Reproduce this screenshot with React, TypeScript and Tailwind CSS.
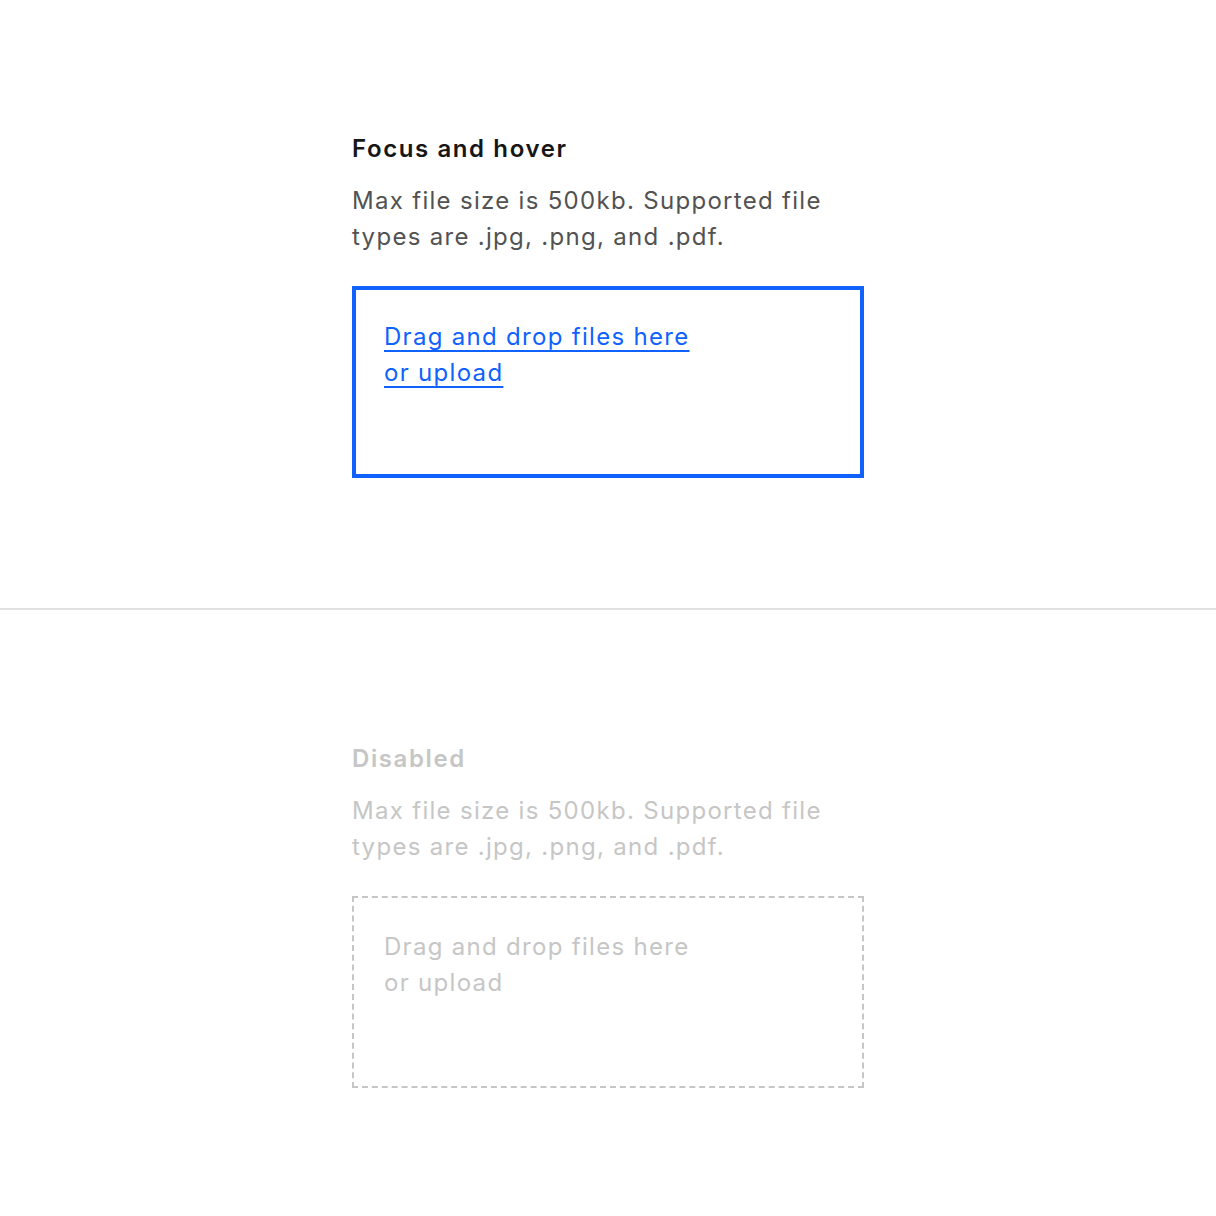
type UploaderProps = {
  title: string;
  disabled?: boolean;
};

const FileUploader = ({ title, disabled = false }: UploaderProps) => {
  return (
    <div className="w-[512px] flex flex-col">
      <h3
        className={`pt-[1px] h-[32px] text-[24px] leading-[32px] font-semibold tracking-[1.6px] ${
          disabled ? 'text-[#c6c6c6]' : 'text-[#161616]'
        }`}
      >
        {title}
      </h3>
      <p
        className={`mt-[18px] pt-[1px] h-[72px] text-[24px] leading-[36px] tracking-[1.3px] ${
          disabled ? 'text-[#c6c6c6]' : 'text-[#525252]'
        }`}
      >
        Max file size is 500kb. Supported file
        <br />
        types are .jpg, .png, and .pdf.
      </p>
      <div
        className={`mt-8 h-[192px] ${
          disabled
            ? 'border-2 border-dashed border-[#c6c6c6] px-[30px] pt-[31px]'
            : 'border-4 border-[#0f62fe] px-[28px] pt-[29px]'
        }`}
      >
        <span
          className={`text-[24px] leading-[36px] tracking-[1.3px] ${
            disabled ? 'text-[#c6c6c6]' : 'text-[#0f62fe] underline underline-offset-[5px] decoration-2'
          }`}
        >
          Drag and drop files here
          <br />
          or upload
        </span>
      </div>
    </div>
  );
};

export default function App() {
  return (
    <div className="min-h-[1216px] bg-white font-['Inter',sans-serif]">
      <div className="flex justify-center pt-[132px] pb-[130px]">
        <FileUploader title="Focus and hover" />
      </div>
      <div className="h-[2px] bg-[#e0e0e0]" />
      <div className="flex justify-center pt-[132px] pb-[128px]">
        <FileUploader title="Disabled" disabled />
      </div>
    </div>
  );
}
